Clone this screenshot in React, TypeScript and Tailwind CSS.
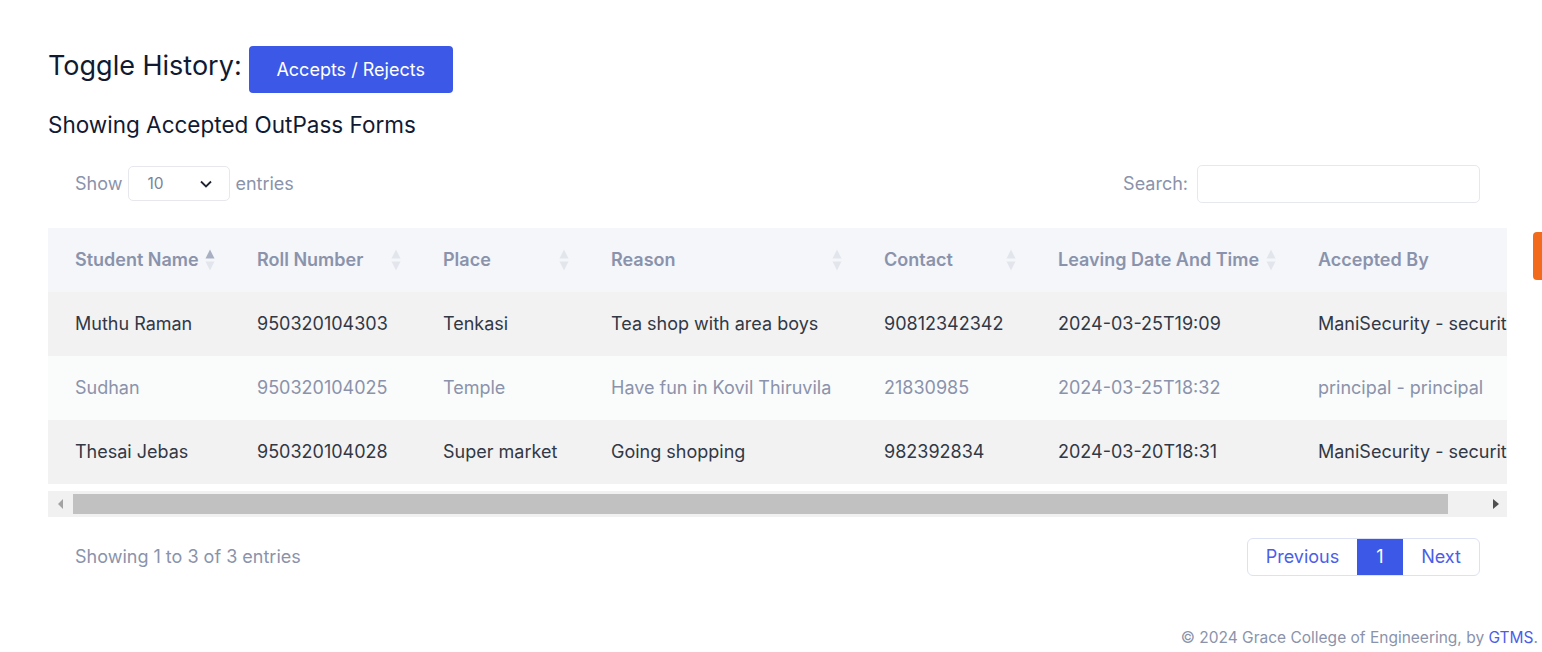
import React from "react";

const cols = [
  { label: "Student Name", w: 182, sort: "asc" },
  { label: "Roll Number", w: 186, sort: "both" },
  { label: "Place", w: 168, sort: "both" },
  { label: "Reason", w: 273, sort: "both" },
  { label: "Contact", w: 174, sort: "both" },
  { label: "Leaving Date And Time", w: 260, sort: "both" },
  { label: "Accepted By", w: 260, sort: "none" },
];

const rows = [
  ["Muthu Raman", "950320104303", "Tenkasi", "Tea shop with area boys", "90812342342", "2024-03-25T19:09", "ManiSecurity - security"],
  ["Sudhan", "950320104025", "Temple", "Have fun in Kovil Thiruvila", "21830985", "2024-03-25T18:32", "principal - principal"],
  ["Thesai Jebas", "950320104028", "Super market", "Going shopping", "982392834", "2024-03-20T18:31", "ManiSecurity - security"],
];

function SortIcon({ mode }: { mode: string }) {
  if (mode === "none") return null;
  const up = mode === "asc" ? "#a9afc2" : "#e2e5ec";
  const down = "#e2e5ec";
  return (
    <svg width="10" height="24" viewBox="0 0 10 24" className="absolute right-[15px] top-1/2 -translate-y-1/2">
      <polygon points="5,1.5 9.5,10.5 0.5,10.5" fill={up} />
      <polygon points="0.5,13.5 9.5,13.5 5,22.5" fill={down} />
    </svg>
  );
}

export default function App() {
  return (
    <div className="relative min-h-[652px] bg-white" style={{ fontFamily: "Inter, 'Noto Sans', sans-serif" }}>
      <div className="pl-[48px] pr-[35px] pt-[46px]">
        <div className="flex items-center">
          <span className="mr-[7px] pb-[8px] text-[27px] leading-none text-[#111a33]">Toggle History:</span>
          <button className="h-[47px] w-[204px] rounded-[4px] bg-[#3c58e7] text-[18px] text-white">Accepts / Rejects</button>
        </div>
        <div className="mt-[21px] text-[22.5px] leading-none text-[#111a33]">Showing Accepted OutPass Forms</div>

        <div className="mt-[28px] flex items-center justify-between text-[18px] text-[#8a93ab]">
          <div className="flex items-center pl-[27px]">
            <span>Show</span>
            <div className="ml-[6px] mr-[5px] flex h-[35px] w-[102px] items-center justify-between rounded-[5px] border border-[#e6e8ee] pl-[18px] pr-[16px] text-[15.5px] text-[#7b8296]">
              <span>10</span>
              <svg width="14" height="10" viewBox="0 0 14 10">
                <path d="M2 2.5 L7 7.5 L12 2.5" fill="none" stroke="#1f2433" strokeWidth="1.8" />
              </svg>
            </div>
            <span>entries</span>
          </div>
          <div className="flex items-center pr-[27px]">
            <span className="mr-[9px]">Search:</span>
            <div className="h-[38px] w-[283px] rounded-[5px] border border-[#e6e8ee] bg-white" />
          </div>
        </div>

        <div className="mt-[25px] overflow-hidden">
          <table className="w-[1503px] table-fixed border-collapse text-left text-[18px]">
            <colgroup>
              {cols.map((c) => (
                <col key={c.label} style={{ width: c.w }} />
              ))}
            </colgroup>
            <thead>
              <tr className="h-[64px] bg-[#f4f6fa]">
                {cols.map((c) => (
                  <th key={c.label} className="relative whitespace-nowrap pl-[27px] font-semibold text-[#8a93ab]">
                    {c.label}
                    <SortIcon mode={c.sort} />
                  </th>
                ))}
              </tr>
            </thead>
            <tbody>
              {rows.map((r, i) => (
                <tr
                  key={i}
                  className={
                    i % 2 === 1
                      ? "h-[64px] bg-[#fafbfb] text-[#8a93ab]"
                      : "h-[64px] bg-[#f2f2f2] text-[#313846]"
                  }
                >
                  {r.map((v, j) => (
                    <td key={j} className="whitespace-nowrap pl-[27px]">
                      {v}
                    </td>
                  ))}
                </tr>
              ))}
            </tbody>
          </table>
          <div className="mt-[7px] flex h-[26px] items-center bg-[#f1f1f1]">
            <div className="flex w-[25px] items-center justify-center">
              <svg width="6" height="10" viewBox="0 0 6 10"><polygon points="5,0 5,10 0,5" fill="#a3a3a3" /></svg>
            </div>
            <div className="h-[20px] w-[1375px] bg-[#c1c1c1]" />
            <div className="flex flex-1 items-center justify-end pr-[8px]">
              <svg width="6" height="10" viewBox="0 0 6 10"><polygon points="0,0 0,10 6,5" fill="#505050" /></svg>
            </div>
          </div>
        </div>

        <div className="mt-[21px] flex items-center justify-between">
          <span className="pl-[27px] text-[18px] text-[#8a93ab]">Showing 1 to 3 of 3 entries</span>
          <div className="mr-[27px] flex h-[38px] overflow-hidden rounded-[6px] border border-[#dde1f5] text-[18px] text-[#4b5ee8]">
            <div className="flex w-[109px] items-center justify-center">Previous</div>
            <div className="flex w-[46px] items-center justify-center bg-[#3c58e7] text-white">1</div>
            <div className="flex w-[76px] items-center justify-center">Next</div>
          </div>
        </div>
      </div>

      <div className="mt-[50px] pr-[4px] text-right text-[15.5px] text-[#8a93ab]">
        © 2024 Grace College of Engineering, by <span className="text-[#4b5ee8]">GTMS</span>.
      </div>

      <div className="absolute right-0 top-[232px] h-[48px] w-[9px] rounded-l-[4px] bg-[#f26b1d]" />
    </div>
  );
}
